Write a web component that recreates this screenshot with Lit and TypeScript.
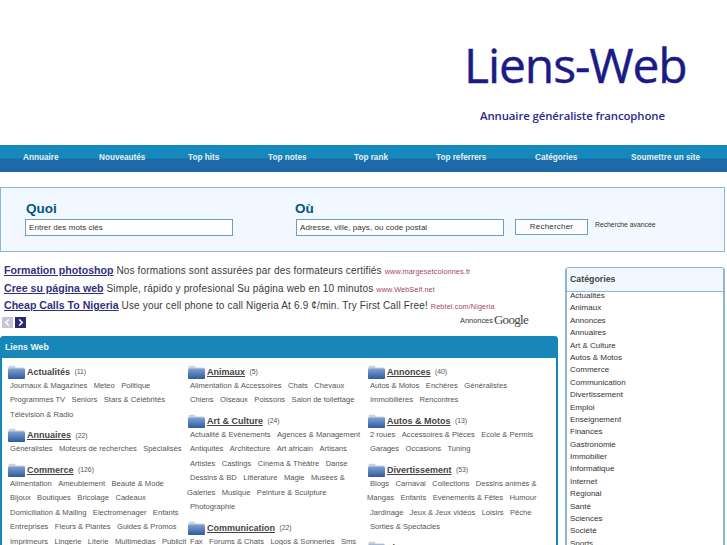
import { LitElement, html, css } from "lit";
import { customElement } from "lit/decorators.js";

type Cat = { name: string; count: number; plain?: boolean; subs: string[] };

const COLUMNS: Cat[][] = [
  [
    { name: "Actualités", count: 11, plain: true, subs: ["Journaux & Magazines", "Meteo", "Politique", "Programmes TV", "Seniors", "Stars & Célébrités", "Télévision & Radio"] },
    { name: "Annuaires", count: 22, subs: ["Généralistes", "Moteurs de recherches", "Spécialisés"] },
    { name: "Commerce", count: 126, subs: ["Alimentation", "Ameublement", "Beauté & Mode", "Bijoux", "Boutiques", "Bricolage", "Cadeaux", "Domiciliation & Mailing", "Electroménager", "Enfants", "Entreprises", "Fleurs & Plantes", "Guides & Promos", "Imprimeurs", "Lingerie", "Literie", "Multimédias", "Publicit"] },
  ],
  [
    { name: "Animaux", count: 5, subs: ["Alimentation & Accessoires", "Chats", "Chevaux", "Chiens", "Oiseaux", "Poissons", "Salon de toilettage"] },
    { name: "Art & Culture", count: 24, subs: ["Actualité & Evènements", "Agences & Management", "Antiquités", "Architecture", "Art africain", "Artisans", "Artistes", "Castings", "Cinéma & Théâtre", "Danse", "Dessins & BD", "Littérature", "Magie", "Musées & Galeries", "Musique", "Peinture & Sculpture", "Photographie"] },
    { name: "Communication", count: 22, subs: ["Fax", "Forums & Chats", "Logos & Sonneries", "Sms"] },
  ],
  [
    { name: "Annonces", count: 40, subs: ["Autos & Motos", "Enchères", "Généralistes", "Immobilières", "Rencontres"] },
    { name: "Autos & Motos", count: 13, subs: ["2 roues", "Accessoires & Pièces", "Ecole & Permis", "Garages", "Occasions", "Tuning"] },
    { name: "Divertissement", count: 53, subs: ["Blogs", "Carnaval", "Collections", "Dessins animés & Mangas", "Enfants", "Evènements & Fêtes", "Humour", "Jardinage", "Jeux & Jeux vidéos", "Loisirs", "Pêche", "Sorties & Spectacles"] },
    { name: "Finances", count: 31, subs: [] },
  ],
];

const NAV = ["Annuaire", "Nouveautés", "Top hits", "Top notes", "Top rank", "Top referrers", "Catégories", "Soumettre un site"];

const ADS = [
  { t: "Formation photoshop", d: "Nos formations sont assurées par des formateurs certifiés", u: "www.margesetcolonnes.fr" },
  { t: "Cree su página web", d: "Simple, rápido y profesional Su página web en 10 minutos", u: "www.WebSelf.net" },
  { t: "Cheap Calls To Nigeria", d: "Use your cell phone to call Nigeria At 6.9 ¢/min. Try First Call Free!", u: "Rebtel.com/Nigeria" },
];

const SIDE = ["Actualités", "Animaux", "Annonces", "Annuaires", "Art & Culture", "Autos & Motos", "Commerce", "Communication", "Divertissement", "Emploi", "Enseignement", "Finances", "Gastronomie", "Immobilier", "Informatique", "Internet", "Régional", "Santé", "Sciences", "Société", "Sports"];

@customElement("app-root")
export class AppRoot extends LitElement {
  static styles = css`
    :host {
      display: block;
      width: 727px;
      height: 545px;
      overflow: hidden;
      background: #fff;
      font-family: "Liberation Sans", Arial, sans-serif;
      color: #444;
    }
    .header {
      height: 145px;
      box-sizing: border-box;
      padding: 35px 0 0 464px;
      color: #1b1b86;
      font-family: "Open Sans", sans-serif;
    }
    .logo {
      font-size: 48px;
      line-height: 60px;
      letter-spacing: -1.1px;
      -webkit-text-stroke: 0.4px #1b1b86;
    }
    .tag {
      margin: 12px 0 0 16px;
      font-size: 11.4px;
      line-height: 17px;
      font-weight: 600;
      letter-spacing: -0.1px;
      color: #2b2b8e;
    }
    .nav {
      height: 27px;
      box-sizing: border-box;
      padding: 0 0 2px 23px;
      display: grid;
      grid-template-columns: 76px 89px 80px 86px 82px 99px 96px auto;
      align-items: center;
      background: linear-gradient(#1589bb 0, #1589bb 48%, #1e69a8 52%, #1e69a8 100%);
      color: #e4f0f6;
      font-size: 8.2px;
      font-weight: bold;
      white-space: nowrap;
    }
    .search {
      margin-top: 15px;
      width: 725px;
      height: 65px;
      box-sizing: border-box;
      border: 1px solid #8db6d6;
      background: #f1f8ff;
      display: grid;
      grid-template-columns: 270px 220px 80px auto;
      padding: 13px 0 0 24px;
    }
    .field h2 {
      margin: 0 0 2px 1px;
      font-size: 13.5px;
      line-height: 16px;
      color: #05567f;
    }
    .where h2 { margin-left: 0; }
    .input {
      width: 208px;
      height: 17px;
      box-sizing: border-box;
      border: 1px solid #6f9fbd;
      background: #fff;
      color: #333;
      font-size: 8px;
      letter-spacing: 0.05px;
      line-height: 15px;
      padding-left: 3px;
      white-space: nowrap;
    }
    .where .input { margin-left: 1px; }
    .go { padding-top: 18px; }
    .btn {
      width: 73px;
      height: 16px;
      box-sizing: border-box;
      border: 1px solid #6f9fbd;
      background: #fbfdff;
      color: #333;
      font-size: 8px;
      line-height: 14px;
      text-align: center;
      letter-spacing: 0.2px;
    }
    .adv { padding-top: 19px; font-size: 6.8px; line-height: 10px; color: #333; white-space: nowrap; }
    .main {
      display: grid;
      grid-template-columns: 558px 160px;
      column-gap: 7px;
      padding-top: 10px;
    }
    .ad {
      padding-left: 4px;
      height: 17.6px;
      line-height: 17px;
      font-size: 10px;
      letter-spacing: 0.16px;
      white-space: nowrap;
      color: #3a3a3a;
    }
    .ad a { color: #32327c; font-weight: bold; font-size: 10.6px; text-decoration: underline; letter-spacing: 0; }
    .ad .url { color: #a8456a; font-size: 7.3px; letter-spacing: 0.1px; }
    .adfoot {
      height: 20px;
      padding: 1px 30px 0 2px;
      display: flex;
      align-items: flex-start;
      gap: 2px;
    }
    .arrow {
      width: 11px;
      height: 11px;
      margin-top: 1px;
      background: #2a2a74;
      display: block;
    }
    .arrow.off { background: #c5c5d8; }
    .google {
      margin-left: auto;
      display: flex;
      align-items: center;
      gap: 1px;
      font-size: 7.4px;
      color: #333;
      height: 15px;
      margin-top: -3px;
    }
    .google b {
      font-family: "Liberation Serif", serif;
      font-size: 13px;
      font-weight: normal;
      letter-spacing: -0.7px;
      color: #444;
    }
    .panel {
      border: solid #1786b8;
      border-width: 0 2px;
      border-radius: 4px 4px 0 0;
      height: 300px;
      box-sizing: border-box;
      width: 558px;
    }
    .panel-head {
      height: 22px;
      margin: 0 -2px;
      padding-left: 5px;
      background: #1786b8;
      border-radius: 4px 4px 0 0;
      color: #eef6fa;
      font-size: 8.8px;
      font-weight: bold;
      line-height: 23px;
    }
    .cols {
      display: grid;
      grid-template-columns: 180px 180px 180px;
      padding: 7px 0 0 6px;
    }
    .cat { margin-bottom: 6px; }
    .cat-head {
      display: flex;
      align-items: center;
      height: 14px;
    }
    .cat-head svg { width: 17px; height: 14px; flex: none; margin-right: 2px; }
    .cat-head strong {
      font-size: 9px;
      text-decoration: underline;
      color: #444;
    }
    .cat-head strong.plain { text-decoration: none; }
    .cat-head span { font-size: 6.8px; margin-left: 4.5px; color: #555; }
    .subs {
      margin-left: -1px;
      font-size: 7.6px;
      line-height: 14.5px;
      color: #555;
      width: 181px;
    }
    .subs a {
      padding: 0 1.3px 0 3px;
    }
    .side {
      margin-top: 5px;
      width: 160px;
      height: 300px;
      box-sizing: border-box;
      border: 1px solid #8db6d6;
      border-width: 1px 2px 0;
      border-radius: 4px 4px 0 0;
    }
    .side h3 {
      margin: 0 0 -2px;
      height: 24px;
      box-sizing: border-box;
      padding-left: 3px;
      background: #f1f8ff;
      border-bottom: 1px solid #8db6d6;
      font-size: 8.8px;
      line-height: 23px;
      color: #444;
    }
    .side div {
      padding-left: 3px;
      height: 12.4px;
      line-height: 12.4px;
      font-size: 8px;
      color: #333;
    }
  `;

  private folder() {
    return html`<svg viewBox="0 0 17 14" aria-hidden="true">
      <defs>
        <linearGradient id="f" x1="0" y1="0" x2="0" y2="1">
          <stop offset="0" stop-color="#7ea2d2"></stop>
          <stop offset="1" stop-color="#2f5a9f"></stop>
        </linearGradient>
      </defs>
      <path d="M0.5 13V2Q0.5 0.7 2 0.7H6.5L8 2.4H15.5Q16.5 2.4 16.5 3.4V13Z" fill="#c9d3de"></path>
      <path d="M0 13.2V4.4Q0 3.6 1 3.6H16Q17 3.6 17 4.4V13.2Q17 14 16 14H1Q0 14 0 13.2Z" fill="url(#f)"></path>
    </svg>`;
  }

  private renderCat(c: Cat) {
    return html`<div class="cat">
      <div class="cat-head">
        ${this.folder()}
        <strong class=${c.plain ? "plain" : ""}>${c.name}</strong>
        <span>(${c.count})</span>
      </div>
      <div class="subs">${c.subs.map((s) => html`<a>${s}</a> `)}</div>
    </div>`;
  }

  render() {
    return html`
      <div class="header">
        <div class="logo">Liens-Web</div>
        <div class="tag">Annuaire généraliste francophone</div>
      </div>
      <div class="nav">${NAV.map((n) => html`<span>${n}</span>`)}</div>
      <div class="search">
        <div class="field">
          <h2>Quoi</h2>
          <div class="input">Entrer des mots clés</div>
        </div>
        <div class="field where">
          <h2>Où</h2>
          <div class="input">Adresse, ville, pays, ou code postal</div>
        </div>
        <div class="go"><div class="btn">Rechercher</div></div>
        <div class="adv">Recherche avancée</div>
      </div>
      <div class="main">
        <div>
          ${ADS.map((a) => html`<div class="ad"><a>${a.t}</a> ${a.d} <span class="url">${a.u}</span></div>`)}
          <div class="adfoot">
            <svg class="arrow off" viewBox="0 0 11 11"><path d="M6.8 2.5 3.8 5.5 6.8 8.5" fill="none" stroke="#fff" stroke-width="1.6"></path></svg>
            <svg class="arrow" viewBox="0 0 11 11"><path d="M4.2 2.5 7.2 5.5 4.2 8.5" fill="none" stroke="#fff" stroke-width="1.6"></path></svg>
            <div class="google">Annonces <b>Google</b></div>
          </div>
          <div class="panel">
            <div class="panel-head">Liens Web</div>
            <div class="cols">
              ${COLUMNS.map((col) => html`<div>${col.map((c) => this.renderCat(c))}</div>`)}
            </div>
          </div>
        </div>
        <div class="side">
          <h3>Catégories</h3>
          ${SIDE.map((s) => html`<div>${s}</div>`)}
        </div>
      </div>
    `;
  }
}
